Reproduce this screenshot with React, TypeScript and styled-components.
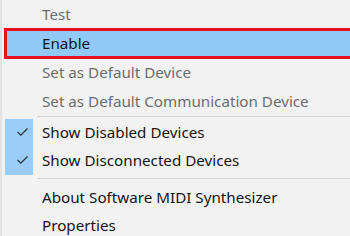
import React from 'react';
import styled, { createGlobalStyle } from 'styled-components';

const GlobalStyle = createGlobalStyle`
  html, body {
    margin: 0;
    padding: 0;
    background: #f2f2f2;
    overflow: hidden;
  }
`;

const Menu = styled.ul`
  list-style: none;
  margin: 0;
  padding: 0;
  width: 350px;
  height: 236px;
  background: #f2f2f2;
  border-left: 2px solid #e2e2e2;
  box-sizing: border-box;
  font-family: 'Noto Sans', 'Open Sans', sans-serif;
  font-size: 15.2px;
  overflow: hidden;
`;

const Item = styled.li<{ $disabled?: boolean; $active?: boolean; $h?: number }>`
  position: relative;
  display: flex;
  align-items: center;
  box-sizing: border-box;
  height: ${({ $h }) => $h ?? 28}px;
  margin-left: 2px;
  padding: 0 0 2px 38px;
  color: ${({ $disabled }) => ($disabled ? '#6d6d6d' : '#151515')};
  background: ${({ $active }) => ($active ? '#91c9f7' : 'transparent')};
  white-space: nowrap;

  ${({ $active }) =>
    $active &&
    `
    &::after {
      content: '';
      position: absolute;
      top: -1px;
      bottom: -1px;
      left: 0;
      right: -10px;
      border: 3px solid #e81123;
    }
  `}
`;

const CheckGroup = styled.div`
  position: relative;
`;

const CheckColumn = styled.div`
  position: absolute;
  left: 3px;
  top: 0;
  bottom: 0;
  width: 28px;
  background: #99ccf7;
`;

const CheckIcon = styled.svg`
  position: absolute;
  left: 12px;
  width: 13px;
  height: 10px;
`;

const Separator = styled.li<{ $above: number; $below: number }>`
  height: 1px;
  margin: ${({ $above, $below }) => `${$above}px 0 ${$below}px 35px`};
  background: #d2d2d2;
`;

const Check = () => (
  <CheckIcon viewBox="0 0 13 10">
    <polyline points="1.5,4.8 4.8,8.2 11.5,1.5" fill="none" stroke="#2b2b2b" strokeWidth="1.2" />
  </CheckIcon>
);

export default function App() {
  return (
    <>
      <GlobalStyle />
      <Menu>
        <Item $disabled $h={29}>Test</Item>
        <Item $active $h={29}>Enable</Item>
        <Item $disabled $h={29}>Set as Default Device</Item>
        <Item $disabled $h={29}>Set as Default Communication Device</Item>
        <Separator $above={0} $below={2} />
        <CheckGroup>
          <CheckColumn />
          <Item $h={28}>
            <Check />
            Show Disabled Devices
          </Item>
          <Item $h={28}>
            <Check />
            Show Disconnected Devices
          </Item>
        </CheckGroup>
        <Separator $above={3} $below={5} />
        <Item $h={28}>About Software MIDI Synthesizer</Item>
        <Item $h={28}>Properties</Item>
      </Menu>
    </>
  );
}
